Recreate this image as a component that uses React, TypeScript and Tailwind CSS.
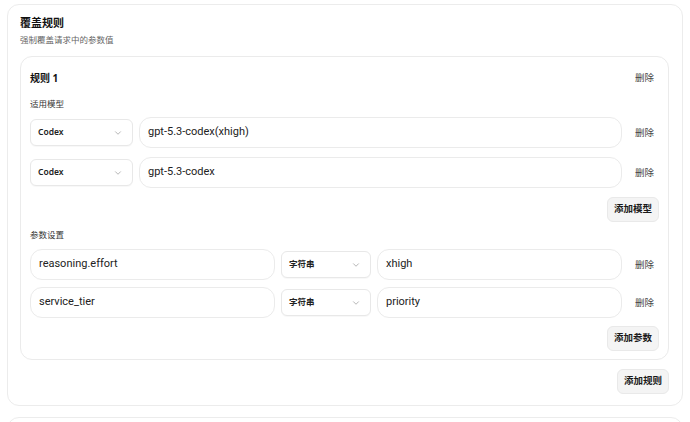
import React from "react";
import { ChevronDown } from "lucide-react";

const font = { fontFamily: '"Noto Sans", "Noto Sans CJK SC", sans-serif' };
const inputFont = { fontFamily: 'Roboto, "Noto Sans CJK SC", sans-serif' };

function Select({ value, w }: { value: string; w: string }) {
  return (
    <div
      className={`${w} h-[27px] shrink-0 border border-[#e8e8e8] rounded-[6px] bg-white flex items-center justify-between pl-[7px] pr-[9px] shadow-[0_1px_1px_rgba(0,0,0,0.03)]`}
    >
      <span className="text-[8.5px] font-semibold text-[#222]">{value}</span>
      <ChevronDown size={10} strokeWidth={1.5} className="text-[#8a8a8a]" />
    </div>
  );
}

function Input({ value, w }: { value: string; w: string }) {
  return (
    <div
      className={`${w} h-[31px] border border-[#ebebeb] rounded-[12px] bg-white flex items-center pl-[8px] text-[11px] text-[#222]`}
      style={inputFont}
    >
      {value}
    </div>
  );
}

function Del() {
  return (
    <button className="ml-[2px] px-[5px] text-[9.5px] text-[#444] leading-[14px] shrink-0">
      删除
    </button>
  );
}

function Btn({ children }: { children: React.ReactNode }) {
  return (
    <button className="self-end h-[25px] px-[6px] rounded-[6px] border border-[#e9e9e9] bg-[#f4f4f4] text-[9.5px] font-bold text-[#1a1a1a]">
      {children}
    </button>
  );
}

export default function App() {
  return (
    <div className="min-h-screen bg-white px-[7px] pt-[4px] flex flex-col gap-[11px]" style={font}>
      <div className="border border-[#ececec] rounded-[12px] pl-[12px] pr-[13px] pt-[9px] pb-[11px] flex flex-col">
        <div className="text-[11px] font-bold leading-[18px] text-[#111]">覆盖规则</div>
        <div className="text-[8.5px] leading-[16px] text-[#666]">强制覆盖请求中的参数值</div>

        <div className="mt-[8px] border border-[#ebebeb] rounded-[12px] px-[9px] pt-[11px] pb-[8px] flex flex-col">
          <div className="flex items-center justify-between h-[20px]">
            <span className="text-[10px] font-bold text-[#111]">规则 1</span>
            <Del />
          </div>
          <div className="mt-[9px] text-[8.5px] leading-[14px] text-[#333]">适用模型</div>
          <div className="mt-[6px] flex flex-col gap-[9px]">
            {["gpt-5.3-codex(xhigh)", "gpt-5.3-codex"].map((m) => (
              <div key={m} className="flex items-center gap-[6px]">
                <Select value="Codex" w="w-[103px]" />
                <Input value={m} w="flex-1" />
                <Del />
              </div>
            ))}
          </div>
          <div className="mt-[9px] flex flex-col">
            <Btn>添加模型</Btn>
          </div>
          <div className="mt-[6px] text-[8.5px] leading-[14px] text-[#333]">参数设置</div>
          <div className="mt-[7px] flex flex-col gap-[7px]">
            {[
              ["reasoning.effort", "xhigh"],
              ["service_tier", "priority"],
            ].map(([k, v]) => (
              <div key={k} className="flex items-center gap-[6px]">
                <Input value={k} w="w-[245px] shrink-0" />
                <Select value="字符串" w="w-[90px]" />
                <Input value={v} w="flex-1" />
                <Del />
              </div>
            ))}
          </div>
          <div className="mt-[8px] flex flex-col">
            <Btn>添加参数</Btn>
          </div>
        </div>
        <div className="mt-[9px] flex flex-col">
          <Btn>添加规则</Btn>
        </div>
      </div>
      <div className="border border-[#ececec] rounded-[12px] h-[60px]" />
    </div>
  );
}
